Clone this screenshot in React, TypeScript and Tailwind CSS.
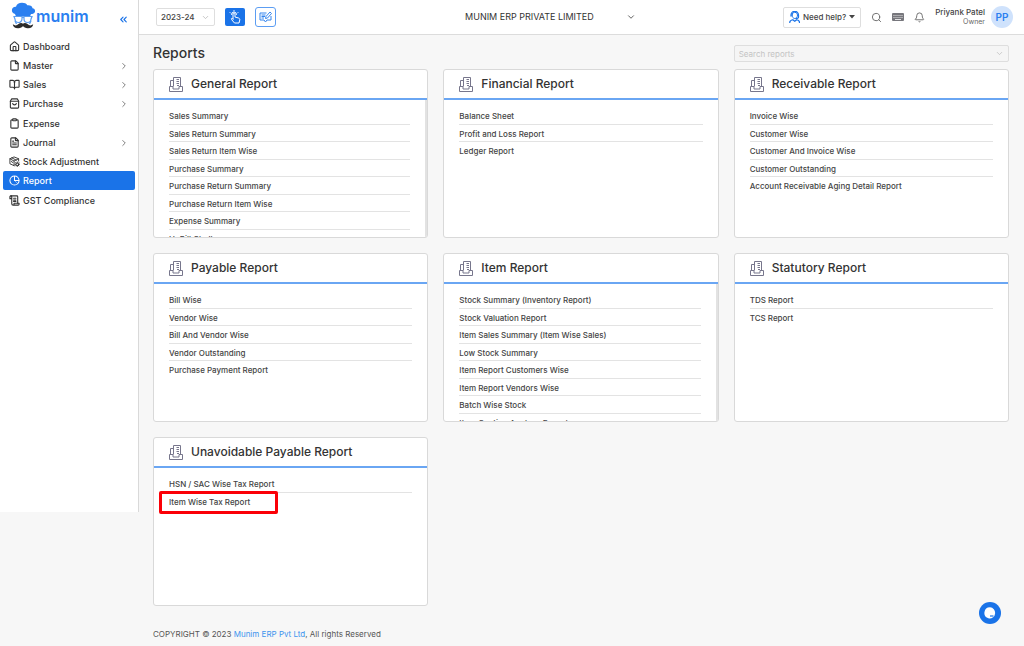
import React, { useState } from "react";
import {
  Bell,
  BookOpen,
  ChevronDown,
  ChevronRight,
  ChevronsLeft,
  Clipboard,
  File,
  FileText,
  House,
  Search,
} from "lucide-react";

interface NavItem {
  label: string;
  icon: React.ReactNode;
  expandable?: boolean;
}

interface ReportGroup {
  title: string;
  reports: string[];
  scrollable?: boolean;
}

const ICON = { size: 11, strokeWidth: 2.4 };

const PurchaseIcon = () => (
  <svg width="11" height="11" viewBox="0 0 24 24" fill="none" stroke="currentColor" strokeWidth="2.4" strokeLinejoin="round" strokeLinecap="round">
    <path d="M3 6.5 6 2h12l3 4.5V20a2 2 0 0 1-2 2H5a2 2 0 0 1-2-2z" />
    <path d="M3 7h18" />
    <path d="M8 12c1 4 7 4 8 0" />
  </svg>
);

const StockIcon = () => (
  <svg width="11" height="11" viewBox="0 0 24 24" fill="none" stroke="currentColor" strokeWidth="2" strokeLinejoin="round" strokeLinecap="round">
    <path d="M11 21 2 17V6l9-4 10 4v5M2 6l9 5 10-5M11 11v10M6 4l10 5M5 12l3 2" />
    <circle cx="18" cy="18" r="3" />
    <path d="M18 13v2M18 21v2M13 18h2M21 18h2M14.5 14.5l1.4 1.4M20.2 20.2l1.4 1.4M21.5 14.5l-1.4 1.4M15.9 20.2l-1.4 1.4" />
  </svg>
);

const ReportIcon = () => (
  <svg width="11" height="11" viewBox="0 0 24 24" fill="none" stroke="currentColor" strokeWidth="2.2" strokeLinejoin="round">
    <circle cx="12" cy="12" r="10" />
    <path d="M12 2v10h10" />
    <path d="m12 12 7 7" strokeWidth="1" />
  </svg>
);

const GstIcon = () => (
  <svg width="11" height="11" viewBox="0 0 24 24" fill="none" stroke="currentColor" strokeWidth="2.4" strokeLinejoin="round" strokeLinecap="round">
    <path d="M6 8H2V4a2 2 0 0 1 4 0v15a3 3 0 0 0 3 3h11a2 2 0 0 0 2-2v-2H11v2" />
    <path d="M4 2h13a2 2 0 0 1 2 2v14M10 7h5M10 11h5M10 14h5" />
  </svg>
);

const navItems: NavItem[] = [
  { label: "Dashboard", icon: <House {...ICON} /> },
  { label: "Master", icon: <File {...ICON} />, expandable: true },
  { label: "Sales", icon: <BookOpen {...ICON} />, expandable: true },
  { label: "Purchase", icon: <PurchaseIcon />, expandable: true },
  { label: "Expense", icon: <Clipboard {...ICON} /> },
  { label: "Journal", icon: <FileText {...ICON} />, expandable: true },
  { label: "Stock Adjustment", icon: <StockIcon /> },
  { label: "Report", icon: <ReportIcon /> },
  { label: "GST Compliance", icon: <GstIcon /> },
];

const groups: ReportGroup[] = [
  {
    title: "General Report",
    scrollable: true,
    reports: [
      "Sales Summary",
      "Sales Return Summary",
      "Sales Return Item Wise",
      "Purchase Summary",
      "Purchase Return Summary",
      "Purchase Return Item Wise",
      "Expense Summary",
      "UnBill Challan",
    ],
  },
  {
    title: "Financial Report",
    reports: ["Balance Sheet", "Profit and Loss Report", "Ledger Report"],
  },
  {
    title: "Receivable Report",
    reports: [
      "Invoice Wise",
      "Customer Wise",
      "Customer And Invoice Wise",
      "Customer Outstanding",
      "Account Receivable Aging Detail Report",
    ],
  },
  {
    title: "Payable Report",
    reports: [
      "Bill Wise",
      "Vendor Wise",
      "Bill And Vendor Wise",
      "Vendor Outstanding",
      "Purchase Payment Report",
    ],
  },
  {
    title: "Item Report",
    scrollable: true,
    reports: [
      "Stock Summary (Inventory Report)",
      "Stock Valuation Report",
      "Item Sales Summary (Item Wise Sales)",
      "Low Stock Summary",
      "Item Report Customers Wise",
      "Item Report Vendors Wise",
      "Batch Wise Stock",
      "Item Costing Analyze Report",
    ],
  },
  { title: "Statutory Report", reports: ["TDS Report", "TCS Report"] },
  {
    title: "Unavoidable Payable Report",
    reports: ["HSN / SAC Wise Tax Report", "Item Wise Tax Report"],
  },
];

const HIGHLIGHTED = "Item Wise Tax Report";

const Logo = () => (
  <a href="#" className="flex items-center text-[#2a7ff0]">
    <svg width="25" height="27" viewBox="0 0 25 27">
      <path
        d="M5 14.5 4 12C1.500 11.500 .5 9.500 1 7.500 1.500 5.500 3 4.500 5 4.800 5.500 2.300 8 .8 11 .8c2.500 0 4.300 .8 5.300 2.400 3-.4 5 1 5.200 3 3 .3 3.500 4.300 1 5.300-.8 .5-1.500 .6-2.500 .6l-1 2.400z"
        fill="#2a7ff0"
      />
      <path
        d="M3 14.500h8v2.500a3.500 3.500 0 0 1-7 0zM13 14.500h8l-1 2.500a3.500 3.500 0 0 1-7 0z"
        fill="#ffffff"
        stroke="#5a9df0"
        strokeWidth="1.200"
      />
      <path d="M11 15.500h2M4 19l1.500 3M20 19l-1.500 3" stroke="#5a9df0" strokeWidth="1.200" />
      <path
        d="M12 21.700c-1-1-3-1-4.500.3C5.800 23.700 4 24 1.800 22.300 2 25 4.500 26.600 7.500 26.300c2-.2 3.500-1 4.500-2.300 1 1.300 2.500 2.100 4.500 2.300 3 .3 5.500-1.300 5.700-4-2.200 1.700-4 1.400-5.700-.3-1.500-1.300-3.500-1.300-4.500-.3z"
        fill="#2b2b2b"
      />
    </svg>
    <span className="text-base leading-5 font-semibold">munim</span>
  </a>
);

const CardIcon = () => (
  <svg width="14" height="15" viewBox="0 0 14 15" fill="none" stroke="#77768c" strokeWidth="1">
    <path d="M4.500 9.500V.5h7v9" />
    <path d="M4.500 3.500h-3v6" />
    <path d="M.5 9.500h3.500V12h6V9.500h3.500v5H.5z" />
    <path d="M7.500 2.500H10M7.500 4.500H10M7.500 6.500H10M8 8.500h2" />
  </svg>
);

const Sidebar = () => (
  <aside className="min-h-128 w-[139px] shrink-0 self-start border-r border-[#d9d9d9] bg-white px-[3px] pt-0.5">
    <div className="flex h-[35px] items-start justify-between pl-2">
      <Logo />
      <button type="button" aria-label="Collapse menu" className="mt-3 mr-1.5 text-[#1a73e8]">
        <ChevronsLeft size={11} strokeWidth={2.5} />
      </button>
    </div>
    <nav className="text-[9px] font-medium">
      {navItems.map((item) => (
        <a
          key={item.label}
          href="#"
          className={
            item.label === "Report"
              ? "mb-px flex h-[19px] items-center gap-[3px] rounded-xs bg-[#1a73e8] px-1.5 text-white"
              : "flex h-[19px] items-center gap-[3px] px-1.5 text-[#333333] [&:nth-child(4)]:mb-px"
          }
        >
          {item.icon}
          <span className="flex-1">{item.label}</span>
          {item.expandable && <ChevronRight size={10} className="text-[#666666]" />}
        </a>
      ))}
    </nav>
  </aside>
);

const Header = () => {
  const [year, setYear] = useState("2023-24");

  return (
    <header className="flex h-[35px] items-center border-b border-[#dcdcdc] bg-white pr-[11px] pl-[17px]">
      <div className="flex items-center gap-2.5">
        <label className="flex h-[18px] w-[59px] items-center rounded-xs border border-[#dedede] pr-1 pl-1">
          <select
            aria-label="Financial year"
            value={year}
            onChange={(e) => setYear(e.target.value)}
            className="min-w-0 flex-1 appearance-none text-[8px] leading-4 font-medium text-[#444444] outline-none"
          >
            <option>2023-24</option>
          </select>
          <ChevronDown size={9} className="shrink-0 text-[#b5b5b5]" />
        </label>
        <button type="button" aria-label="Quick actions" className="flex h-[18px] w-5 items-center justify-center rounded-xs bg-[#1a73e8] text-white">
          <svg width="12" height="14" viewBox="0 0 24 28" fill="none" stroke="currentColor" strokeWidth="2" strokeLinecap="round" strokeLinejoin="round">
            <path d="M8 18V8a2 2 0 0 1 4 0v6l7 2c2 .6 3 2 2.500 4L20 26H11l-6-7c-1.500-2 .5-3.500 3-1z" />
            <path d="M5 9a5 5 0 0 1 10 0M2 5l1 1M10 1v1M18 5l-1 1" />
          </svg>
        </button>
        <button type="button" aria-label="Feedback" className="flex h-5 w-[21px] items-center justify-center rounded-[3px] border border-[#5c9df2] text-[#3585ee]">
          <svg width="13" height="12" viewBox="0 0 26 24" fill="none" stroke="currentColor" strokeWidth="2" strokeLinejoin="round">
            <path d="M15 4H2v14h8l3 4 3-4h8V10" />
            <path d="M5 8h8M5 11h7M5 14h5" />
            <path d="m13 15 1-4 8-9 3 3-8 9z" />
          </svg>
        </button>
      </div>

      <div className="flex flex-1 justify-center pl-[42px]">
        <label className="flex w-[171px] items-center">
          <select aria-label="Company" className="min-w-0 flex-1 appearance-none text-[9px] leading-4 text-[#333333] outline-none">
            <option>MUNIM ERP PRIVATE LIMITED</option>
          </select>
          <ChevronDown size={10} className="shrink-0 text-[#444444]" />
        </label>
      </div>

      <div className="flex items-center">
        <button type="button" className="flex h-[21px] w-[78px] items-center justify-center gap-[3px] rounded-xs border border-[#dedede] text-[8px] font-medium text-[#444444]">
          <svg width="11" height="12" viewBox="0 0 22 24" fill="none" stroke="#1a73e8" strokeWidth="2" strokeLinecap="round">
            <path d="M6 8a5.500 5.500 0 0 1 11 0c0 4-2.500 7-5.500 7S6 12 6 8z" />
            <path d="M4 10V8a7.500 7.500 0 0 1 15 0v4c0 2-2 3-5 3" strokeWidth="2.500" />
            <path d="M1.500 23c0-4 3-5 6-5.500l4 3 4-3c3 .5 5.500 1.500 5.500 5.500" strokeWidth="2.500" />
          </svg>
          Need help?
          <svg width="6" height="4" viewBox="0 0 6 4">
            <path d="M0 0h6L3 3.500z" fill="#444444" />
          </svg>
        </button>
        <div className="flex items-center gap-2.5 px-2.5 text-[#666666]">
          <button type="button" aria-label="Search">
            <Search size={11} strokeWidth={2} />
          </button>
          <button type="button" aria-label="Keyboard shortcuts">
            <svg width="12" height="8" viewBox="0 0 12 8">
              <rect width="12" height="8" rx="1" fill="#77777d" />
              <path d="M1.500 2.500h9M1.500 4.500h9" stroke="#ffffff" strokeDasharray="1 1" strokeWidth=".8" />
              <path d="M3 6.500h6" stroke="#ffffff" strokeWidth=".8" />
            </svg>
          </button>
          <button type="button" aria-label="Notifications">
            <Bell size={11} strokeWidth={2} />
          </button>
        </div>
        <div className="flex items-center gap-1.5">
          <div className="text-right">
            <p className="text-[8px] leading-[9px] font-medium text-[#444444]">Priyank Patel</p>
            <p className="text-[7px] leading-[9px] text-[#666666]">Owner</p>
          </div>
          <div className="flex size-[22px] items-center justify-center rounded-full bg-[#cfe2fc] text-[10px] font-semibold text-[#2a7ff0]">
            PP
          </div>
        </div>
      </div>
    </header>
  );
};

const ReportCard: React.FC<ReportGroup> = ({ title, reports, scrollable }) => (
  <section className="flex h-[169px] flex-col overflow-hidden rounded-[3px] border border-[#d9d9d9] bg-white">
    <div className="flex h-[30px] shrink-0 items-center gap-2 border-b-2 border-[#6aa6f3] px-[15px]">
      <CardIcon />
      <h2 className="text-xs font-medium text-[#333333]">{title}</h2>
    </div>
    <ul
      className={
        scrollable
          ? "min-h-0 flex-1 overflow-y-auto border-r-2 border-[#e2e2e2] px-[15px] pt-[7px]"
          : "min-h-0 flex-1 px-[15px] pt-[7px]"
      }
    >
      {reports.map((report) => (
        <li
          key={report}
          className="relative border-b border-[#e3e3e3] text-[8px] font-medium text-[#444444] last:border-b-0 odd:h-[18px] even:h-[17px]"
        >
          <a href="#" className="block leading-[18px]">
            {report}
          </a>
          {report === HIGHLIGHTED && (
            <span className="pointer-events-none absolute -top-0.5 -left-2.5 h-[23px] w-[119px] rounded-xs border-3 border-[#fb0007]" />
          )}
        </li>
      ))}
    </ul>
  </section>
);

const App: React.FC = () => {
  const [query, setQuery] = useState("");

  return (
    <div className="flex min-h-screen bg-[#f7f7f7] font-[Inter,sans-serif] text-[#222222]">
      <Sidebar />
      <div className="min-w-0 flex-1">
        <Header />
        <main className="pr-[15px] pl-3.5">
          <div className="grid grid-cols-3 items-start gap-[15px] pt-2.5 pb-[7px]">
            <h1 className="col-span-2 text-sm leading-[15px] font-medium text-[#333333]">Reports</h1>
            <label className="flex h-[17px] items-center rounded-xs border border-[#dedede] bg-[#f5f5f5] px-1">
              <input
                type="text"
                aria-label="Search reports"
                placeholder="Search reports"
                value={query}
                onChange={(e) => setQuery(e.target.value)}
                className="min-w-0 flex-1 text-[8px] outline-none placeholder:text-[#c4c4c4]"
              />
              <ChevronDown size={9} className="text-[#bdbdbd]" />
            </label>
          </div>
          <div className="grid grid-cols-3 gap-[15px]">
            {groups.map((group) => (
              <ReportCard key={group.title} {...group} />
            ))}
          </div>
        </main>
        <footer className="pt-[22px] pb-1.5 pl-3.5 text-[8px] leading-3 text-[#555555]">
          COPYRIGHT © 2023{" "}
          <a href="#" className="text-[#3d94ee]">
            Munim ERP Pvt Ltd
          </a>
          , All rights Reserved
        </footer>
      </div>

      <button
        type="button"
        aria-label="Open chat"
        className="fixed right-[23px] bottom-[22px] flex size-[22px] items-center justify-center rounded-full bg-[#1a73e8]"
      >
        <svg width="12" height="12" viewBox="0 0 12 12">
          <path d="M6 .3a5.600 5.600 0 1 1-1 11.200l-.5-.2A5.600 5.600 0 0 1 6 .3z" fill="#ffffff" />
          <path d="M6 9h3.500" stroke="#1a73e8" strokeWidth="1.200" fill="none" />
        </svg>
      </button>
    </div>
  );
};

export default App;
